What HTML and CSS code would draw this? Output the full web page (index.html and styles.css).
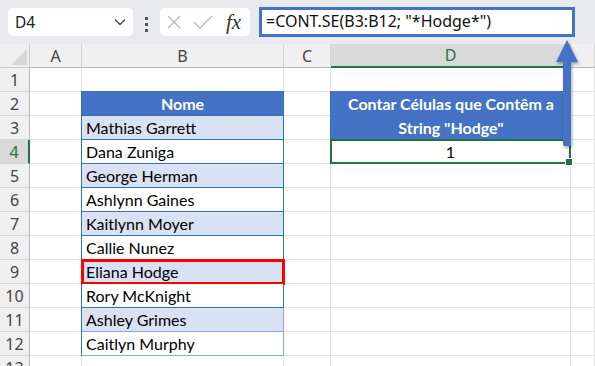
FILE: index.html
```html
<!DOCTYPE html>
<html lang="pt">
<head>
  <meta charset="UTF-8" />
  <title>CONT.SE - Hodge</title>
  <link rel="stylesheet" href="styles.css">
</head>
<body>

  <div class="toolbar">
    <div class="namebox">
      <span>D4</span>
      <svg class="chev" width="12" height="8" viewBox="0 0 12 8"><polyline points="1,1.5 6,6.5 11,1.5" fill="none" stroke="#444" stroke-width="1.4"/></svg>
    </div>
    <div class="dots"><i></i><i></i><i></i></div>
    <div class="fxbox">
      <svg width="14" height="14" viewBox="0 0 14 14"><path d="M1 1 L13 13 M13 1 L1 13" stroke="#b5b5b5" stroke-width="1.3"/></svg>
      <svg width="20" height="14" viewBox="0 0 20 14"><polyline points="1,7 7,13 19,1" fill="none" stroke="#b5b5b5" stroke-width="1.3"/></svg>
      <span class="fx">fx</span>
    </div>
    <div class="formula">=CONT.SE(B3:B12; "*Hodge*")</div>
  </div>

  <div class="sheet">
    <!-- grade de células -->
    <div class="cells">
      <div class="corner"><svg width="20" height="20" viewBox="0 0 20 20"><polygon points="20,4 20,20 4,20" fill="#d6d6d6"/></svg></div>
      <div class="ch">A</div><div class="ch">B</div><div class="ch">C</div><div class="ch sel">D</div><div class="ch"></div>

      <div class="rh">1</div><div class="c"></div><div class="c"></div><div class="c"></div><div class="c"></div><div class="c"></div>
      <div class="rh">2</div><div class="c"></div><div class="c"></div><div class="c"></div><div class="c"></div><div class="c"></div>
      <div class="rh">3</div><div class="c"></div><div class="c"></div><div class="c"></div><div class="c"></div><div class="c"></div>
      <div class="rh sel">4</div><div class="c"></div><div class="c"></div><div class="c"></div><div class="c"></div><div class="c"></div>
      <div class="rh">5</div><div class="c"></div><div class="c"></div><div class="c"></div><div class="c"></div><div class="c"></div>
      <div class="rh">6</div><div class="c"></div><div class="c"></div><div class="c"></div><div class="c"></div><div class="c"></div>
      <div class="rh">7</div><div class="c"></div><div class="c"></div><div class="c"></div><div class="c"></div><div class="c"></div>
      <div class="rh">8</div><div class="c"></div><div class="c"></div><div class="c"></div><div class="c"></div><div class="c"></div>
      <div class="rh">9</div><div class="c"></div><div class="c"></div><div class="c"></div><div class="c"></div><div class="c"></div>
      <div class="rh">10</div><div class="c"></div><div class="c"></div><div class="c"></div><div class="c"></div><div class="c"></div>
      <div class="rh">11</div><div class="c"></div><div class="c"></div><div class="c"></div><div class="c"></div><div class="c"></div>
      <div class="rh">12</div><div class="c"></div><div class="c"></div><div class="c"></div><div class="c"></div><div class="c"></div>
      <div class="rh">13</div><div class="c"></div><div class="c"></div><div class="c"></div><div class="c"></div><div class="c"></div>
    </div>

    <!-- conteúdo por cima da grade -->
    <div class="over">
      <div class="names">
        <div class="nm head">Nome</div>
        <div class="nm band">Mathias Garrett</div>
        <div class="nm">Dana Zuniga</div>
        <div class="nm band">George Herman</div>
        <div class="nm">Ashlynn Gaines</div>
        <div class="nm band">Kaitlynn Moyer</div>
        <div class="nm">Callie Nunez</div>
        <div class="nm band hit">Eliana Hodge</div>
        <div class="nm">Rory McKnight</div>
        <div class="nm band light">Ashley Grimes</div>
        <div class="nm light">Caitlyn Murphy</div>
      </div>

      <div class="dhead">Contar Células que Contêm a String "Hodge"</div>
      <div class="dval">1<span class="handle"></span></div>
    </div>

    <svg class="arrow" width="30" height="116" viewBox="0 0 30 116">
      <defs>
        <filter id="sh" x="-50%" y="-20%" width="200%" height="140%">
          <feDropShadow dx="1" dy="2" stdDeviation="1.5" flood-color="#000" flood-opacity="0.35"/>
        </filter>
      </defs>
      <g filter="url(#sh)" fill="#4472c4">
        <polygon points="15,2 26,24 4,24"/>
        <rect x="11" y="22" width="8" height="86" rx="2"/>
      </g>
    </svg>
  </div>

</body>
</html>
```

FILE: styles.css
```css
body {
  margin: 0;
  width: 595px;
  height: 366px;
  overflow: hidden;
  background: #fff;
  font-family: "Noto Sans", "Open Sans", sans-serif;
}

.toolbar {
  display: flex;
  align-items: flex-start;
  height: 44px;
  padding: 8px 0 0 8px;
  box-sizing: border-box;
  background: #e9eaed;
}

.namebox {
  display: flex;
  align-items: center;
  justify-content: space-between;
  width: 125px;
  height: 28px;
  padding: 0 7px 0 7px;
  box-sizing: border-box;
  background: #fff;
  border-radius: 5px;
  font-size: 15.5px;
  color: #222;
}

.dots {
  display: flex;
  flex-direction: column;
  align-items: center;
  gap: 3px;
  width: 27px;
  padding-top: 9px;
}
.dots i {
  display: block;
  width: 3px;
  height: 3px;
  background: #555;
}

.fxbox {
  display: flex;
  align-items: center;
  gap: 12px;
  width: 90px;
  height: 28px;
  padding-left: 7px;
  box-sizing: border-box;
  background: #fff;
  border-radius: 5px;
}
.fx {
  font-family: "Liberation Serif", serif;
  font-style: italic;
  font-size: 21px;
  color: #333;
  margin-left: 1px;
}

.formula {
  margin-left: 9px;
  margin-top: -1px;
  width: 316px;
  height: 30px;
  box-sizing: border-box;
  border: 3px solid #4472c4;
  background: #fff;
  padding: 0 0 0 4px;
  font-size: 16px;
  line-height: 23px;
  color: #111;
}

.sheet {
  position: relative;
  display: grid;
}

.cells,
.over {
  grid-area: 1 / 1;
  display: grid;
  grid-template-columns: 30px 52px 202px 47px 240px 1fr;
  grid-auto-rows: 24px;
}

.corner {
  display: flex;
  align-items: flex-end;
  justify-content: flex-end;
  padding: 0 2px 2px 0;
  background: #f0f0f0;
  border-right: 1px solid #c9c9c9;
  border-bottom: 1px solid #c9c9c9;
}

.ch {
  display: flex;
  align-items: center;
  justify-content: center;
  background: #f0f0f0;
  border-right: 1px solid #d4d4d4;
  border-bottom: 1px solid #b9b9b9;
  font-size: 16px;
  color: #444;
}
.ch.sel {
  background: #d9d9d9;
  border-bottom: 2px solid #217346;
  color: #217346;
}

.rh {
  display: flex;
  align-items: center;
  justify-content: center;
  background: #f0f0f0;
  border-right: 1px solid #b9b9b9;
  border-bottom: 1px solid #d4d4d4;
  font-size: 16px;
  color: #444;
}
.rh.sel {
  background: #d9d9d9;
  border-right: 2px solid #217346;
  color: #217346;
}

.c {
  border-right: 1px solid #e1e1e1;
  border-bottom: 1px solid #e1e1e1;
}

.names {
  grid-column: 3;
  grid-row: 3 / 14;
  margin: -1px 0 0 -1px;
  display: flex;
  flex-direction: column;
  border-left: 1px solid #2e75b6;
  border-top: 1px solid #2e75b6;
  font-family: Lato, "Liberation Sans", sans-serif;
  font-size: 16px;
  color: #000;
}
.nm {
  height: 24px;
  line-height: 23px;
  padding-left: 4px;
  box-sizing: border-box;
  border-right: 1px solid #2e75b6;
  border-bottom: 1px solid #2e75b6;
  background: #fff;
}
.nm.head {
  background: #4472c4;
  color: #fff;
  font-weight: bold;
  text-align: center;
  padding-left: 0;
  height: 25px;
}
.nm.band {
  background: #d9e1f2;
}
.nm.light {
  border-color: #8ea9db;
}
.nm.hit {
  outline: 3px solid #ff0000;
  outline-offset: -2px;
}

.dhead {
  grid-column: 5;
  grid-row: 3 / 5;
  margin: -1px 0 0 -1px;
  display: flex;
  align-items: center;
  justify-content: center;
  padding: 0 6px;
  background: #4472c4;
  border-left: 1px solid #2e75b6;
  color: #fff;
  font-family: Lato, "Liberation Sans", sans-serif;
  font-weight: bold;
  font-size: 16px;
  line-height: 24px;
  text-align: center;
}

.dval {
  grid-column: 5;
  grid-row: 5;
  position: relative;
  margin: -1px 0 0 -1px;
  border: 2px solid #217346;
  display: flex;
  align-items: center;
  justify-content: center;
  font-family: Lato, "Liberation Sans", sans-serif;
  font-size: 16px;
  color: #000;
  background: #fff;
}
.handle {
  position: absolute;
  right: -4px;
  bottom: -4px;
  width: 6px;
  height: 6px;
  background: #217346;
  border: 1px solid #fff;
}

.arrow {
  position: absolute;
  left: 552px;
  top: -6px;
}
```
